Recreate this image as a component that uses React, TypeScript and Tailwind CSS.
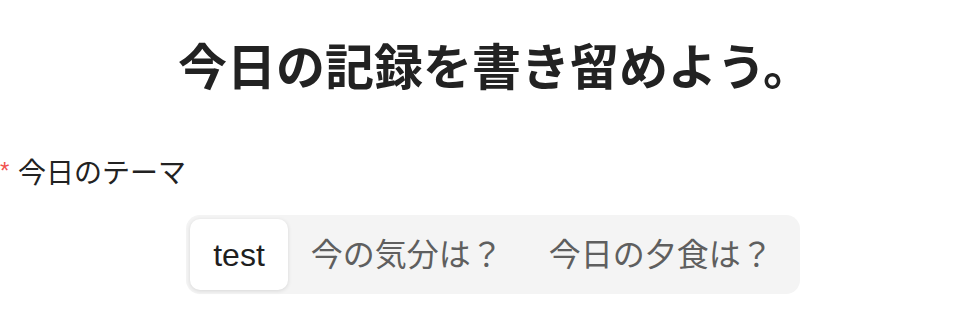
export default function App() {
  const font = { fontFamily: '"Liberation Sans", "Noto Sans CJK JP", sans-serif' };
  return (
    <div className="w-[968px] h-[332px] bg-white text-[#222]" style={font}>
      <h1 className="pt-[37px] pl-[22px] text-center text-[49px] font-bold leading-[62px] text-[#222]">今日の記録を書き留めよう。</h1>
      <div className="mt-[59px] flex items-center h-[32px] text-[28px] text-[#222]">
        <span className="text-[#f0524f] text-[24px] w-[18px] leading-none -mt-[6px]">*</span>
        <span>今日のテーマ</span>
      </div>
      <div className="mt-[25px] flex justify-center pl-[18px]">
        <div className="flex rounded-[14px] bg-[#f4f4f4] p-[4px]">
          <div className="h-[71px] px-[23px] flex items-center rounded-[10px] bg-white shadow-[0_1px_4px_rgba(0,0,0,0.12)] text-[32px] text-[#1f1f1f]">test</div>
          <div className="h-[71px] px-[23px] flex items-center text-[32px] text-[#5f5f5f]">今の気分は？</div>
          <div className="h-[71px] px-[23px] flex items-center text-[32px] text-[#5f5f5f]">今日の夕食は？</div>
        </div>
      </div>
    </div>
  );
}
